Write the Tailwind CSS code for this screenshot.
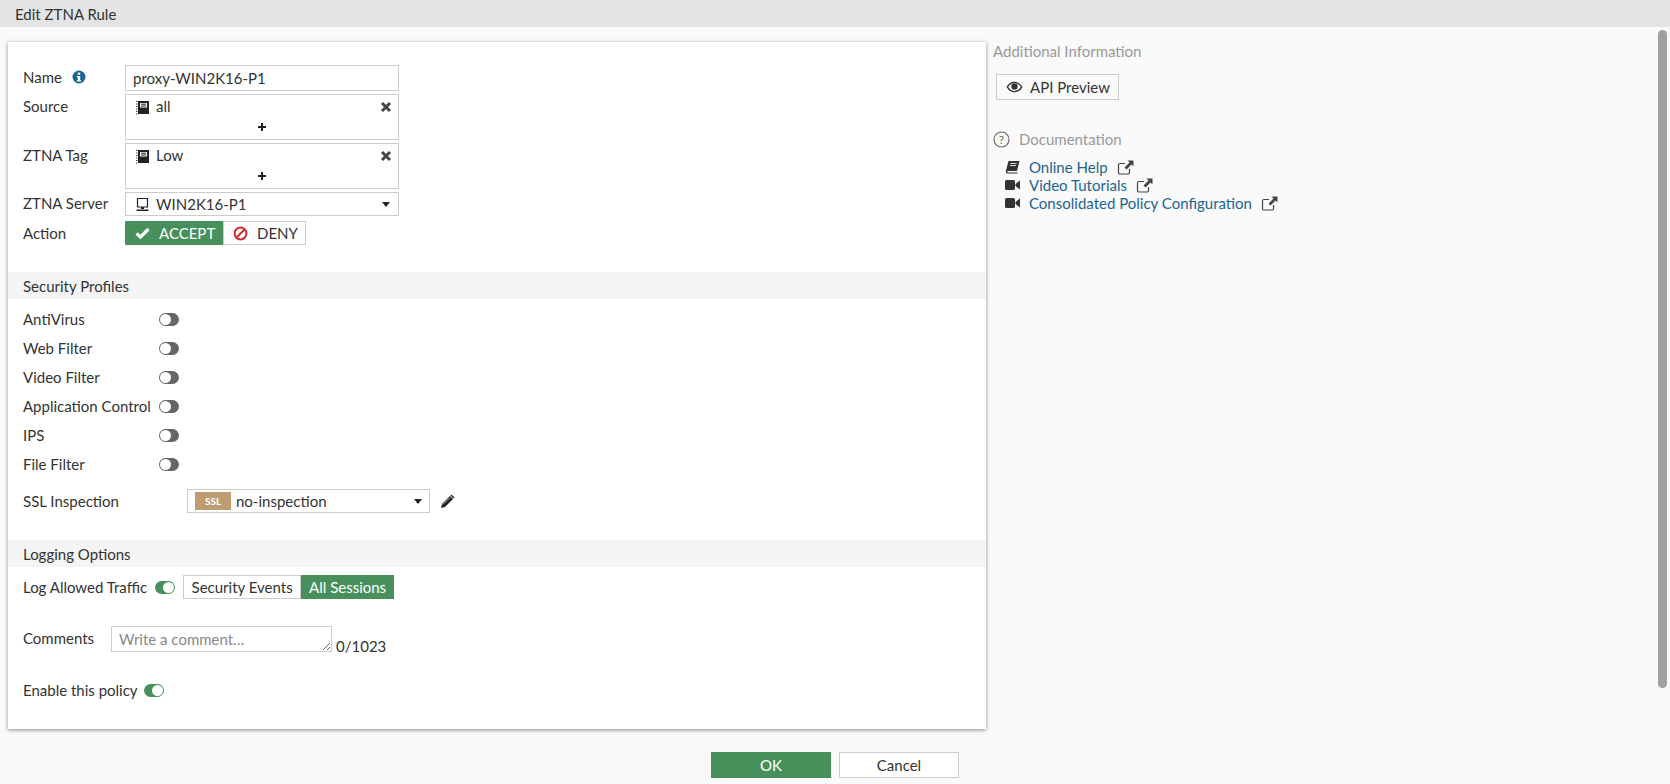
<!DOCTYPE html>
<html lang="en">
<head>
<meta charset="UTF-8">
<title>Edit ZTNA Rule</title>
<script src="https://cdn.jsdelivr.net/npm/@tailwindcss/browser@4"></script>
</head>
<body class="relative w-[1670px] h-[784px] overflow-hidden bg-[#fafafa] text-[15px] leading-[18px] text-[#333] font-['Lato','Open_Sans',sans-serif]">

<!-- title bar -->
<div class="h-[27px] bg-[#e4e4e4] pl-[15px] flex items-center">Edit ZTNA Rule</div>

<div class="flex pl-[8px] pt-[15px]">
  <!-- form panel -->
  <div class="w-[978px] h-[687px] bg-white shadow-[0_1px_4px_rgba(0,0,0,0.45)] pt-[23px] flex flex-col shrink-0">
    <div class="flex flex-col pl-[15px]">
      <div class="flex h-[26px] items-center">
        <div class="w-[102px] flex items-center gap-[10px] pb-[2px]">Name
          <svg class="w-[14px] h-[14px]" viewBox="0 0 14 14"><circle cx="7" cy="7" r="6.5" fill="#1c6491"/><rect x="5.8" y="2.6" width="2.4" height="2.2" fill="#fff"/><path d="M4.8 6h3.4v4.2h1v1.3H4.8v-1.3h1V7.3h-1z" fill="#fff"/></svg>
        </div>
        <div class="w-[274px] h-[26px] border border-[#ccc] pl-[7px] flex items-center">proxy-WIN2K16-P1</div>
      </div>

      <div class="flex mt-[3px]">
        <div class="w-[102px] pt-[3px]">Source</div>
        <div class="w-[274px] h-[46px] border border-[#ccc] flex flex-col">
          <div class="flex items-center h-[24px] pl-[9px] pr-[6px]">
            <svg class="w-[15px] h-[15px] mr-[6px]" viewBox="0 0 15 15"><path d="M3 1h11v13H3z" fill="#222"/><path d="M5 3h7v4.500H5z" fill="#fff"/><path d="M6 4.200h5M6 6h5" stroke="#222"/><path d="M1 1.500h1.500M1 4h1.500M1 6.500h1.500M1 9h1.500M1 11.500h1.500M1 14h1.500" stroke="#444"/></svg>
            <span class="flex-1 pb-[2px]">all</span>
            <svg class="w-[12px] h-[12px]" viewBox="0 0 12 12"><path d="M2 2l8 8M10 2l-8 8" stroke="#444" stroke-width="3"/></svg>
          </div>
          <svg class="w-[8px] h-[8px] mx-auto mt-[4px]" viewBox="0 0 8 8"><path d="M4 0v8M0 4h8" stroke="#222" stroke-width="2"/></svg>
        </div>
      </div>

      <div class="flex mt-[3px]">
        <div class="w-[102px] pt-[3px]">ZTNA Tag</div>
        <div class="w-[274px] h-[46px] border border-[#ccc] flex flex-col">
          <div class="flex items-center h-[24px] pl-[9px] pr-[6px]">
            <svg class="w-[15px] h-[15px] mr-[6px]" viewBox="0 0 15 15"><path d="M3 1h11v13H3z" fill="#222"/><path d="M5 3h7v4.500H5z" fill="#fff"/><path d="M6 4.200h5M6 6h5" stroke="#222"/><path d="M1 1.500h1.500M1 4h1.500M1 6.500h1.500M1 9h1.500M1 11.500h1.500M1 14h1.500" stroke="#444"/></svg>
            <span class="flex-1 pb-[2px]">Low</span>
            <svg class="w-[12px] h-[12px]" viewBox="0 0 12 12"><path d="M2 2l8 8M10 2l-8 8" stroke="#444" stroke-width="3"/></svg>
          </div>
          <svg class="w-[8px] h-[8px] mx-auto mt-[4px]" viewBox="0 0 8 8"><path d="M4 0v8M0 4h8" stroke="#222" stroke-width="2"/></svg>
        </div>
      </div>

      <div class="flex h-[24px] items-center mt-[3px]">
        <div class="w-[102px] pb-[2px]">ZTNA Server</div>
        <div class="w-[274px] h-[24px] border border-[#ccc] flex items-center pl-[9px] pr-[8px]">
          <svg class="w-[15px] h-[15px] mr-[6px]" viewBox="0 0 15 15"><path d="M2.500 1.500h10v8.500h-10z" fill="none" stroke="#222" stroke-width="1.200"/><path d="M6 10h3v2H6z" fill="#222"/><path d="M1.500 12.500h12v1.500h-12z" fill="#222"/></svg>
          <span class="flex-1">WIN2K16-P1</span>
          <span class="w-0 h-0 border-x-[4.500px] border-x-transparent border-t-[5px] border-t-[#222]"></span>
        </div>
      </div>

      <div class="flex h-[24px] items-center mt-[5px]">
        <div class="w-[102px]">Action</div>
        <div class="w-[98px] h-[24px] bg-[#47905c] text-white flex items-center pl-[10px] gap-[9px]">
          <svg class="w-[15px] h-[14px]" viewBox="0 0 15 14"><path d="M1.500 7.500l4 3.500 8-8" fill="none" stroke="#fff" stroke-width="3.200"/></svg>
          ACCEPT
        </div>
        <div class="w-[83px] h-[24px] border border-[#ccc] flex items-center pl-[9px] gap-[9px]">
          <svg class="w-[15px] h-[15px]" viewBox="0 0 15 15"><circle cx="7.500" cy="7.500" r="5.900" fill="none" stroke="#d7282f" stroke-width="2"/><path d="M3.500 11.500l8-8" stroke="#d7282f" stroke-width="2"/></svg>
          DENY
        </div>
      </div>
    </div>

    <div class="h-[27px] bg-[#f4f4f4] mt-[27px] pl-[15px] flex items-center">Security Profiles</div>

    <div class="flex flex-col pl-[15px] mt-[6px]">
      <div class="flex items-center h-[29px]"><div class="w-[136px] pb-[2px]">AntiVirus</div><div class="w-[20px] h-[13px] rounded-full bg-[#666] flex items-center pl-[1px]"><span class="w-[11px] h-[11px] rounded-full bg-white"></span></div></div>
      <div class="flex items-center h-[29px]"><div class="w-[136px] pb-[2px]">Web Filter</div><div class="w-[20px] h-[13px] rounded-full bg-[#666] flex items-center pl-[1px]"><span class="w-[11px] h-[11px] rounded-full bg-white"></span></div></div>
      <div class="flex items-center h-[29px]"><div class="w-[136px] pb-[2px]">Video Filter</div><div class="w-[20px] h-[13px] rounded-full bg-[#666] flex items-center pl-[1px]"><span class="w-[11px] h-[11px] rounded-full bg-white"></span></div></div>
      <div class="flex items-center h-[29px]"><div class="w-[136px] pb-[2px]">Application Control</div><div class="w-[20px] h-[13px] rounded-full bg-[#666] flex items-center pl-[1px]"><span class="w-[11px] h-[11px] rounded-full bg-white"></span></div></div>
      <div class="flex items-center h-[29px]"><div class="w-[136px] pb-[2px]">IPS</div><div class="w-[20px] h-[13px] rounded-full bg-[#666] flex items-center pl-[1px]"><span class="w-[11px] h-[11px] rounded-full bg-white"></span></div></div>
      <div class="flex items-center h-[29px]"><div class="w-[136px] pb-[2px]">File Filter</div><div class="w-[20px] h-[13px] rounded-full bg-[#666] flex items-center pl-[1px]"><span class="w-[11px] h-[11px] rounded-full bg-white"></span></div></div>

      <div class="flex items-center h-[24px] mt-[10px]">
        <div class="w-[164px]">SSL Inspection</div>
        <div class="w-[243px] h-[24px] border border-[#ccc] flex items-center pl-[7px] pr-[7px]">
          <span class="w-[36px] h-[18px] bg-[#be9c72] text-white text-[10px] font-bold flex items-center justify-center mr-[5px]">SSL</span>
          <span class="flex-1">no-inspection</span>
          <span class="w-0 h-0 border-x-[4.500px] border-x-transparent border-t-[5px] border-t-[#222]"></span>
        </div>
        <svg class="w-[15px] h-[15px] ml-[10px]" viewBox="0 0 15 15"><path d="M1 14l1-4 8-8 3 3-8 8z" fill="#222"/><path d="M10.500 1.500l1-1 3 3-1 1z" fill="#222"/><path d="M3 10.500l7-7" stroke="#fff" stroke-width=".6"/></svg>
      </div>
    </div>

    <div class="h-[27px] bg-[#f4f4f4] mt-[27px] pl-[15px] flex items-center">Logging Options</div>

    <div class="flex items-center h-[24px] mt-[8px] pl-[15px]">
      <span>Log Allowed Traffic</span>
      <div class="w-[20px] h-[13px] rounded-full bg-[#47905c] flex items-center justify-end pr-[1px] ml-[8px]"><span class="w-[11px] h-[11px] rounded-full bg-white"></span></div>
      <div class="w-[118px] h-[24px] border border-[#ccc] flex items-center justify-center ml-[8px]">Security Events</div>
      <div class="w-[93px] h-[24px] bg-[#47905c] text-white flex items-center justify-center">All Sessions</div>
    </div>

    <div class="flex items-start mt-[27px] pl-[15px]">
      <div class="w-[88px] pt-[3px]">Comments</div>
      <div class="relative w-[221px] h-[26px] border border-[#ccc] pl-[7px] flex items-center text-[#888]">Write a comment…
        <svg class="absolute right-0 bottom-0 w-[9px] h-[9px]" viewBox="0 0 9 9"><path d="M1 8l7-7M5 8l3-3" stroke="#666" stroke-width="1"/></svg>
      </div>
      <span class="ml-[4px] mt-[11px]">0/1023</span>
    </div>

    <div class="flex items-center h-[18px] mt-[26px] pl-[15px]">
      <span>Enable this policy</span>
      <div class="w-[20px] h-[13px] rounded-full bg-[#47905c] flex items-center justify-end pr-[1px] ml-[6px]"><span class="w-[11px] h-[11px] rounded-full bg-white"></span></div>
    </div>
  </div>

  <!-- side info -->
  <div class="ml-[7px] flex flex-col">
    <div class="text-[#999]">Additional Information</div>
    <div class="ml-[3px] mt-[14px] w-[123px] h-[26px] border border-[#ccc] flex items-center pl-[9px] gap-[7px]">
      <svg class="w-[17px] h-[12px]" viewBox="0 0 17 12"><path d="M.5 6C3 2 5.500.8 8.500.8S14 2 16.500 6c-2.500 4-5 5.200-8 5.200S3 10 .5 6z" fill="#333"/><path d="M2.200 6C4 3.400 6 2.100 8.500 2.100S13 3.400 14.800 6C13 8.600 11 9.900 8.500 9.900S4 8.600 2.200 6z" fill="#fafafa"/><circle cx="8.500" cy="5.500" r="3.200" fill="#333"/></svg>
      API Preview
    </div>
    <div class="flex items-center mt-[30px] text-[#999] gap-[9px]">
      <svg class="w-[17px] h-[17px]" viewBox="0 0 17 17"><circle cx="8.500" cy="8.500" r="7.500" fill="none" stroke="#666" stroke-width="1.100"/><text x="8.500" y="13" text-anchor="middle" font-size="12" fill="#666">?</text></svg>
      Documentation
    </div>
    <div class="flex flex-col ml-[12px] mt-[10px] text-[#1c6491]">
      <div class="flex items-center h-[18px]">
        <svg class="w-[15px] h-[14px] mr-[9px]" viewBox="0 0 15 14"><path d="M3.500 1h11l-2.500 10H3c-1 0-1 1.500 0 1.500h9.500V13.500H2.500C1 13.500.5 12 1 10.500z" fill="#333"/><path d="M5.500 3.500h6M5 5.500h6" stroke="#fff" stroke-width=".8"/></svg>
        Online Help
        <svg class="w-[17px] h-[15px] ml-[9px]" viewBox="0 0 17 15"><path d="M12.500 9v3.500a1.500 1.500 0 0 1-1.500 1.500H3a1.500 1.500 0 0 1-1.500-1.500V5A1.500 1.500 0 0 1 3 3.500h5" fill="none" stroke="#444" stroke-width="1.200"/><path d="M10.500 .5h6v6l-2-2-5 5-2-2 5-5z" fill="#444"/></svg>
      </div>
      <div class="flex items-center h-[18px]">
        <svg class="w-[15px] h-[12px] mr-[9px]" viewBox="0 0 15 12"><rect x="0" y="1" width="10" height="10" rx="1.500" fill="#333"/><path d="M10.500 5l4.500-3.500v9L10.500 7z" fill="#333"/></svg>
        Video Tutorials
        <svg class="w-[17px] h-[15px] ml-[9px]" viewBox="0 0 17 15"><path d="M12.500 9v3.500a1.500 1.500 0 0 1-1.500 1.500H3a1.500 1.500 0 0 1-1.500-1.500V5A1.500 1.500 0 0 1 3 3.500h5" fill="none" stroke="#444" stroke-width="1.200"/><path d="M10.500 .5h6v6l-2-2-5 5-2-2 5-5z" fill="#444"/></svg>
      </div>
      <div class="flex items-center h-[18px]">
        <svg class="w-[15px] h-[12px] mr-[9px]" viewBox="0 0 15 12"><rect x="0" y="1" width="10" height="10" rx="1.500" fill="#333"/><path d="M10.500 5l4.500-3.500v9L10.500 7z" fill="#333"/></svg>
        Consolidated Policy Configuration
        <svg class="w-[17px] h-[15px] ml-[9px]" viewBox="0 0 17 15"><path d="M12.500 9v3.500a1.500 1.500 0 0 1-1.500 1.500H3a1.500 1.500 0 0 1-1.500-1.500V5A1.500 1.500 0 0 1 3 3.500h5" fill="none" stroke="#444" stroke-width="1.200"/><path d="M10.500 .5h6v6l-2-2-5 5-2-2 5-5z" fill="#444"/></svg>
      </div>
    </div>
  </div>
</div>

<!-- footer buttons -->
<div class="flex pl-[711px] mt-[23px] gap-[8px]">
  <div class="w-[120px] h-[26px] bg-[#47905c] text-white flex items-center justify-center">OK</div>
  <div class="w-[120px] h-[26px] bg-white border border-[#ccc] flex items-center justify-center">Cancel</div>
</div>

<!-- scrollbar -->
<div class="absolute left-[1658px] top-[30px] w-[9px] h-[658px] rounded-full bg-[#a0a0a0]"></div>
</body>
</html>
